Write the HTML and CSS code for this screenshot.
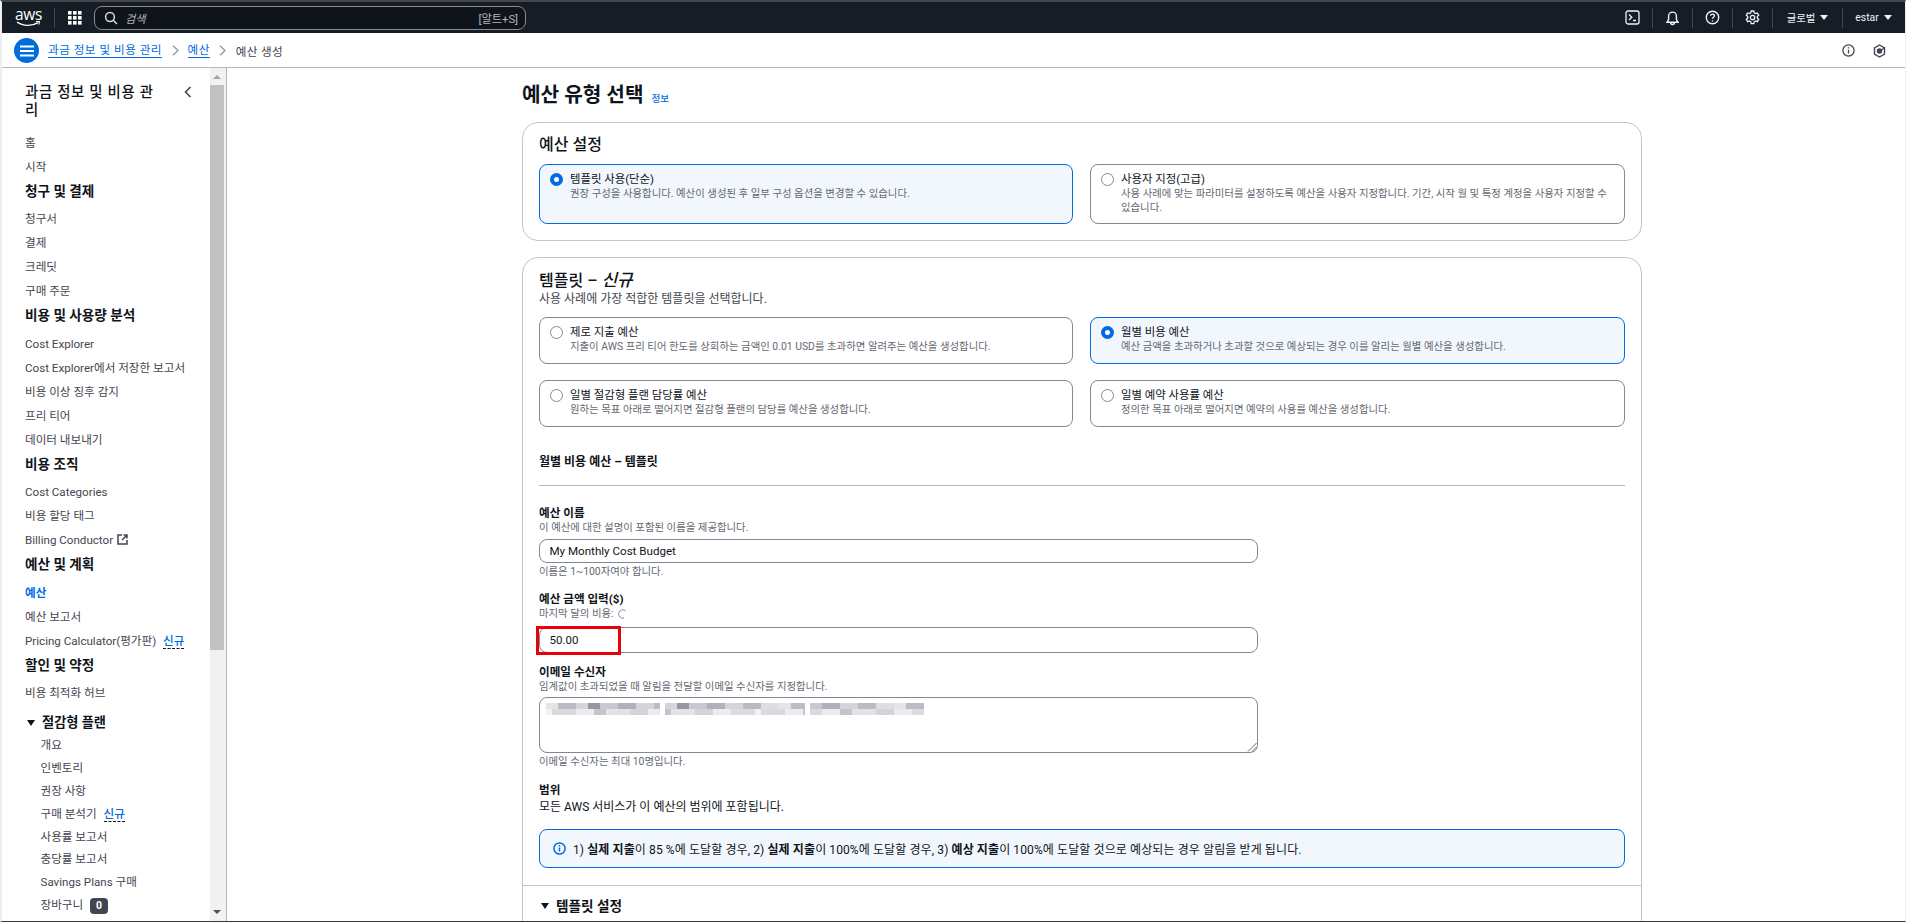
FILE: index.html
```
<!DOCTYPE html>
<html lang="ko">
<head>
<meta charset="utf-8">
<title>예산 생성</title>
<link rel="stylesheet" href="styles.css">
</head>
<body>
<div class="frame">
  <header class="topbar">
    <div class="logo">
      <span class="logo-text">aws</span>
      <svg class="logo-smile" width="25" height="6" viewBox="0 0 25 6"><path d="M1 1c6 4.400 15 4.400 21 .6" fill="none" stroke="#fff" stroke-width="1.400"/><path d="M20 .6l3.600-.3-.9 3.400" fill="none" stroke="#fff" stroke-width="1.100"/></svg>
    </div>
    <span class="logo-div"></span>
    <svg class="grid-icon" width="14" height="14" viewBox="0 0 14 14" fill="#fff"><rect width="3.600" height="3.600"/><rect x="5" width="3.600" height="3.600"/><rect x="10" width="3.600" height="3.600"/><rect y="5" width="3.600" height="3.600"/><rect x="5" y="5" width="3.600" height="3.600"/><rect x="10" y="5" width="3.600" height="3.600"/><rect y="10" width="3.600" height="3.600"/><rect x="5" y="10" width="3.600" height="3.600"/><rect x="10" y="10" width="3.600" height="3.600"/></svg>
    <div class="search">
      <svg width="14" height="14" viewBox="0 0 14 14" fill="none" stroke="#d5dbdb" stroke-width="1.500"><circle cx="6" cy="6" r="4.400"/><path d="M9.200 9.200l3.800 3.800"/></svg>
      <span class="search-ph">검색</span>
      <span class="search-key">[알트+S]</span>
    </div>
    <div class="top-actions">
      <span class="slot first"><svg width="15" height="15" viewBox="0 0 15 15" fill="none" stroke="#f3f3f7" stroke-width="1.300"><rect x="1" y="1" width="13" height="13" rx="2"/><path d="M4 4.500l2.800 2.700L4 10M8 10.500h3"/></svg></span>
      <span class="slot"><svg width="15" height="16" viewBox="0 0 15 16" fill="none" stroke="#f3f3f7" stroke-width="1.400"><path d="M2 12.200h11l-1.600-2.600V6a3.900 3.900 0 0 0-7.800 0v3.600zM5.600 12.600a1.900 1.900 0 0 0 3.800 0"/></svg></span>
      <span class="slot"><svg width="15" height="15" viewBox="0 0 15 15" fill="none" stroke="#f3f3f7" stroke-width="1.400"><circle cx="7.500" cy="7.500" r="6.200"/><path d="M5.600 5.800c.1-2.300 3.800-2.300 3.800 0 0 1.500-1.900 1.400-1.900 3"/><path d="M7.500 10.300v1.200"/></svg></span>
      <span class="slot"><svg width="15" height="15" viewBox="0 0 15 15" fill="none" stroke="#f3f3f7" stroke-width="1.300"><path d="M6.200 1h2.600l.4 1.800 1.400.8 1.800-.6 1.300 2.200-1.400 1.300v1.600l1.400 1.300-1.300 2.200-1.800-.6-1.400.8-.4 1.800H6.200l-.4-1.800-1.400-.8-1.800.6-1.300-2.200 1.400-1.300V6.500L1.300 5.200l1.300-2.200 1.800.6 1.400-.8z"/><circle cx="7.500" cy="7.500" r="2.200"/></svg></span>
      <span class="slot menu region">글로벌<i class="caret"></i></span>
      <span class="slot menu user">estar<i class="caret"></i></span>
    </div>
  </header>

  <div class="crumbbar">
    <span class="menu-btn"><svg width="14" height="12" viewBox="0 0 14 12" stroke="#fff" stroke-width="1.800"><path d="M0 1.500h14M0 6h14M0 10.500h14"/></svg></span>
    <a class="crumb-link">과금 정보 및 비용 관리</a>
    <svg class="crumb-sep" width="7" height="11" viewBox="0 0 7 11" fill="none" stroke="#879596" stroke-width="1.200"><path d="M1 .8l5 4.700-5 4.700"/></svg>
    <a class="crumb-link">예산</a>
    <svg class="crumb-sep" width="7" height="11" viewBox="0 0 7 11" fill="none" stroke="#879596" stroke-width="1.200"><path d="M1 .8l5 4.700-5 4.700"/></svg>
    <span class="crumb-cur">예산 생성</span>
    <span class="crumb-tools">
      <svg width="13" height="13" viewBox="0 0 13 13" fill="none" stroke="#424650" stroke-width="1.300"><circle cx="6.500" cy="6.500" r="5.600"/><path d="M6.500 5.800v3.800M6.500 3.200v1.200"/></svg>
      <svg width="13" height="14" viewBox="0 0 13 14" fill="none" stroke="#424650" stroke-width="1.400"><path d="M6.500 1l5 2.900v6.200l-5 2.900-5-2.900V3.900z"/><circle cx="6.500" cy="7" r="2" fill="#424650"/><path d="M6.500 7l5-3" /></svg>
    </span>
  </div>

  <div class="workspace">
    <nav class="sidebar">
      <div class="nav-title-row">
        <h2 class="nav-title">과금 정보 및 비용 관리</h2>
        <svg class="nav-close" width="8" height="12" viewBox="0 0 8 12" fill="none" stroke="#424650" stroke-width="1.600"><path d="M6.500 1L1.500 6l5 5"/></svg>
      </div>
      <ul class="nav-list">
        <li class="nav-item">홈</li>
        <li class="nav-item">시작</li>
        <li class="nav-head">청구 및 결제</li>
        <li class="nav-item">청구서</li>
        <li class="nav-item">결제</li>
        <li class="nav-item">크레딧</li>
        <li class="nav-item">구매 주문</li>
        <li class="nav-head">비용 및 사용량 분석</li>
        <li class="nav-item">Cost Explorer</li>
        <li class="nav-item">Cost Explorer에서 저장한 보고서</li>
        <li class="nav-item">비용 이상 징후 감지</li>
        <li class="nav-item">프리 티어</li>
        <li class="nav-item">데이터 내보내기</li>
        <li class="nav-head">비용 조직</li>
        <li class="nav-item">Cost Categories</li>
        <li class="nav-item">비용 할당 태그</li>
        <li class="nav-item">Billing Conductor <svg class="ext" width="11" height="11" viewBox="0 0 11 11" fill="none" stroke="#424650" stroke-width="1.500"><path d="M5 1H1v9h9V6M6.500 1H10v3.500M10 1L5 6"/></svg></li>
        <li class="nav-head">예산 및 계획</li>
        <li class="nav-item active">예산</li>
        <li class="nav-item">예산 보고서</li>
        <li class="nav-item">Pricing Calculator(평가판) <span class="new">신규</span></li>
        <li class="nav-head">할인 및 약정</li>
        <li class="nav-item">비용 최적화 허브</li>
        <li class="nav-group"><i class="tri"></i>절감형 플랜</li>
        <li class="nav-item sub">개요</li>
        <li class="nav-item sub">인벤토리</li>
        <li class="nav-item sub">권장 사항</li>
        <li class="nav-item sub">구매 분석기 <span class="new">신규</span></li>
        <li class="nav-item sub">사용률 보고서</li>
        <li class="nav-item sub">충당률 보고서</li>
        <li class="nav-item sub">Savings Plans 구매</li>
        <li class="nav-item sub">장바구니 <span class="count">0</span></li>
      </ul>
    </nav>
    <div class="scrollbar">
      <i class="sb-up"></i>
      <span class="sb-thumb"></span>
      <i class="sb-down"></i>
    </div>

    <main class="main">
      <div class="page-title"><h1>예산 유형 선택</h1><a class="info">정보</a></div>

      <section class="card">
        <h2 class="card-h">예산 설정</h2>
        <div class="tiles">
          <div class="tile on tall"><i class="radio"></i><div><div class="tile-t">템플릿 사용(단순)</div><div class="tile-d">권장 구성을 사용합니다. 예산이 생성된 후 일부 구성 옵션을 변경할 수 있습니다.</div></div></div>
          <div class="tile tall"><i class="radio"></i><div><div class="tile-t">사용자 지정(고급)</div><div class="tile-d">사용 사례에 맞는 파라미터를 설정하도록 예산을 사용자 지정합니다. 기간, 시작 월 및 특정 계정을 사용자 지정할 수 있습니다.</div></div></div>
        </div>
      </section>

      <section class="card second">
        <div class="card-body">
          <h2 class="card-h tight">템플릿 – <em>신규</em></h2>
          <p class="card-sub">사용 사례에 가장 적합한 템플릿을 선택합니다.</p>
          <div class="tiles">
            <div class="tile"><i class="radio"></i><div><div class="tile-t">제로 지출 예산</div><div class="tile-d">지출이 AWS 프리 티어 한도를 상회하는 금액인 0.01 USD를 초과하면 알려주는 예산을 생성합니다.</div></div></div>
            <div class="tile on"><i class="radio"></i><div><div class="tile-t">월별 비용 예산</div><div class="tile-d">예산 금액을 초과하거나 초과할 것으로 예상되는 경우 이를 알리는 월별 예산을 생성합니다.</div></div></div>
            <div class="tile"><i class="radio"></i><div><div class="tile-t">일별 절감형 플랜 담당률 예산</div><div class="tile-d">원하는 목표 아래로 떨어지면 절감형 플랜의 담당률 예산을 생성합니다.</div></div></div>
            <div class="tile"><i class="radio"></i><div><div class="tile-t">일별 예약 사용률 예산</div><div class="tile-d">정의한 목표 아래로 떨어지면 예약의 사용률 예산을 생성합니다.</div></div></div>
          </div>
          <h3 class="sub-head">월별 비용 예산 – 템플릿</h3>
          <hr class="rule">

          <label class="f-label first">예산 이름</label>
          <div class="f-desc">이 예산에 대한 설명이 포함된 이름을 제공합니다.</div>
          <div class="input name">My Monthly Cost Budget</div>
          <div class="f-hint">이름은 1~100자여야 합니다.</div>

          <label class="f-label">예산 금액 입력($)</label>
          <div class="f-desc">마지막 달의 비용: <svg class="spin" width="10" height="10" viewBox="0 0 10 10" fill="none" stroke="#8c8c94" stroke-width="1"><path d="M8.500 1.800A4.200 4.200 0 1 0 7 9"/></svg></div>
          <div class="input amount">50.00<span class="highlight"></span></div>

          <label class="f-label">이메일 수신자</label>
          <div class="f-desc">임계값이 초과되었을 때 알림을 전달할 이메일 수신자를 지정합니다.</div>
          <div class="textarea">
            <div class="redact"><span class="r1"></span><span class="r2"></span><span class="r3"></span></div>
            <svg class="grip" width="10" height="10" viewBox="0 0 10 10" stroke="#6a6a6a" stroke-width="1"><path d="M9.500 1L1 9.500M9.500 5L5 9.500"/></svg>
          </div>
          <div class="f-hint">이메일 수신자는 최대 10명입니다.</div>

          <div class="scope-h">범위</div>
          <div class="scope-t">모든 AWS 서비스가 이 예산의 범위에 포함됩니다.</div>

          <div class="alert">
            <svg width="13" height="13" viewBox="0 0 13 13" fill="none" stroke="#006ce0" stroke-width="1.500"><circle cx="6.500" cy="6.500" r="5.600"/><path d="M6.500 5.600v4M6.500 3v1.400"/></svg>
            <span>1) <b>실제 지출</b>이 85 %에 도달할 경우, 2) <b>실제 지출</b>이 100%에 도달할 경우, 3) <b>예상 지출</b>이 100%에 도달할 것으로 예상되는 경우 알림을 받게 됩니다.</span>
          </div>
        </div>
        <div class="expander"><i class="tri"></i>템플릿 설정</div>
      </section>
    </main>
  </div>
</div>
</body>
</html>
```
FILE: styles.css
```
* { box-sizing: border-box; }
html, body { margin: 0; height: 100%; overflow: hidden; }
body {
  font-family: Roboto, "Noto Sans CJK KR", sans-serif;
  font-size: 11.6px;
  color: #0f141a;
  background: #fff;
}
.frame {
  height: 922px;
  display: flex;
  flex-direction: column;
  overflow: hidden;
  border-top: 2px solid #45474a;
  border-left: 2px solid #eeeeee;
  border-right: 1px solid #eeeeee;
  border-bottom: 1px solid #333a44;
}

/* top navigation */
.topbar {
  flex: 0 0 31px;
  display: flex;
  align-items: center;
  background: #161d26;
  color: #f3f3f7;
  padding-left: 14px;
}
.logo { width: 25px; display: flex; flex-direction: column; align-items: center; height: 19px; }
.logo-text { font-family: "Open Sans", sans-serif; font-size: 15.5px; line-height: 13px; color: #fff; letter-spacing: -.4px; }
.logo-div { width: 1px; height: 20px; background: #424650; margin-left: 13px; }
.grid-icon { margin-left: 13px; }
.search {
  margin-left: 12px;
  width: 432px;
  height: 24px;
  border: 1px solid #8c8c94;
  border-radius: 8px;
  background: #0f141a;
  display: flex;
  align-items: center;
  padding: 0 7px 0 9px;
}
.search-ph { margin-left: 7px; font-style: italic; color: #b4b4bb; font-size: 11.2px; }
.search-key { margin-left: auto; color: #b4b4bb; font-size: 11.2px; }
.top-actions { margin-left: auto; display: flex; align-items: center; }
.slot { width: 40px; height: 20px; display: flex; align-items: center; justify-content: center; border-left: 1px solid #424650; }
.slot.first { border-left: 0; }
.slot.menu { font-size: 10.4px; color: #f3f3f7; gap: 5px; }
.slot.region { width: 70px; }
.slot.user { width: 63px; padding-right: 1px; }
.caret { width: 0; height: 0; border-left: 4px solid transparent; border-right: 4px solid transparent; border-top: 5px solid #f3f3f7; }

/* breadcrumbs */
.crumbbar {
  flex: 0 0 35px;
  display: flex;
  align-items: center;
  padding: 1px 0 0 12px;
  border-bottom: 1px solid #b4b4bb;
  background: #fff;
}
.menu-btn { width: 25px; height: 25px; border-radius: 50%; background: #006ce0; display: flex; align-items: center; justify-content: center; }
.crumb-link { margin-left: 9px; color: #006ce0; border-bottom: 1px solid #006ce0; line-height: 14px; font-size: 11.6px; letter-spacing: .5px; }
.crumb-sep { margin-left: 9.5px; }
.crumb-cur { margin-left: 9.5px; color: #424650; font-size: 11.6px; letter-spacing: .3px; }
.crumb-tools { margin-left: auto; margin-right: 19px; display: flex; gap: 18px; align-items: center; }

/* layout */
.workspace { flex: 1; display: flex; min-height: 0; }
.sidebar { width: 208px; flex: none; padding: 16px 0 0 23px; overflow: hidden; }
.nav-title-row { display: flex; align-items: flex-start; }
.nav-title { margin: 0; width: 136px; font-size: 14.4px; line-height: 17.5px; font-weight: 500; letter-spacing: .7px; word-break: break-all; }
.nav-close { margin: 2px 0 0 23px; }
.nav-list { list-style: none; margin: 12px 0 0; padding: 0; }
.nav-item { height: 24px; line-height: 24px; color: #424650; white-space: nowrap; font-size: 11.6px; }
.nav-item.active { color: #006ce0; font-weight: 700; }
.nav-item.sub { padding-left: 15.5px; height: 22.9px; line-height: 22.9px; }
.nav-head { height: 25px; line-height: 25px; margin-bottom: 3.4px; font-size: 13.6px; font-weight: 700; color: #0f141a; }
.nav-group { height: 22px; line-height: 22px; margin-top: 7px; font-size: 13.2px; font-weight: 700; display: flex; align-items: center; }
.tri { width: 0; height: 0; border-left: 4px solid transparent; border-right: 4px solid transparent; border-top: 6px solid #0f141a; margin: 0 7px 0 2px; }
.new { color: #006ce0; font-weight: 500; border-bottom: 1px dashed #0f141a; margin-left: 4px; line-height: 14px; display: inline-block; }
.count { display: inline-block; background: #424650; color: #fff; border-radius: 4px; width: 18px; height: 16px; line-height: 16px; text-align: center; font-weight: 700; font-size: 10.4px; margin-left: 4px; }
.ext { vertical-align: -1px; margin-left: 1px; }

.scrollbar { width: 16px; flex: none; background: #f1f1f1; display: flex; flex-direction: column; align-items: center; border-right: 2px solid #f1f1f1; }
.sb-up { margin-top: 7px; width: 0; height: 0; border-left: 4px solid transparent; border-right: 4px solid transparent; border-bottom: 4px solid #a3a3a3; }
.sb-thumb { width: 14px; height: 565px; background: #c1c1c1; margin-top: 6px; }
.sb-down { margin-top: auto; margin-bottom: 7px; width: 0; height: 0; border-left: 4px solid transparent; border-right: 4px solid transparent; border-top: 4px solid #505050; }

.main { flex: 1; min-width: 0; padding: 16px 0 0 295px; border-left: 1px solid #b4b4bb; overflow: hidden; }
.page-title { display: flex; align-items: baseline; height: 22px; margin-bottom: 16px; }
.page-title h1 { margin: 0; font-size: 20.2px; line-height: 22px; font-weight: 700; }
.info { margin-left: 8px; color: #006ce0; font-size: 9.6px; font-weight: 500; }

.card { width: 1120px; border: 1px solid #bfc4cf; border-radius: 16px; padding: 11px 16px 16px; }
.card.second { margin-top: 16px; padding: 12px 0 120px; }
.card-body { padding: 0 16px; }
.card-h { margin: 0 0 8px; font-size: 16px; line-height: 22px; font-weight: 500; }
.card-h.tight { margin: 0; height: 20px; line-height: 20px; }
.card-h em { font-style: italic; font-size: 17px; }
.card-sub { margin: 1px 0 10px; font-size: 12px; line-height: 16px; color: #424650; }

.tiles { display: grid; grid-template-columns: 534px 535px; column-gap: 17px; row-gap: 16px; }
.tile { display: flex; gap: 7.5px; border: 1px solid #7f8896; border-radius: 8px; padding: 7px 12px 9px 9.5px; min-height: 47px; background: #fff; }
.tile.tall { min-height: 60px; }
.tile.on { border-color: #006ce0; background: #f2f7fe; }
.radio { flex: none; width: 13px; height: 13px; margin-top: 1px; border-radius: 50%; border: 1.5px solid #7f8896; background: #fff; }
.on .radio { border: 4px solid #006ce0; }
.tile-t { font-size: 11.4px; line-height: 15px; color: #0f141a; }
.tile-d { font-size: 10.4px; line-height: 13.5px; color: #656871; }

.sub-head { margin: 27px 0 0; font-size: 12px; line-height: 16px; font-weight: 700; }
.rule { margin: 15px 0 0; border: 0; border-top: 1px solid #b4b4bb; width: 1086px; }

.f-label { display: block; margin-top: 12.5px; font-size: 11.6px; line-height: 15px; font-weight: 700; }
.f-label.first { margin-top: 20px; }
.f-desc { font-size: 10.4px; line-height: 14px; color: #656871; }
.f-hint { margin-top: 2px; font-size: 10.4px; line-height: 14px; color: #656871; }
.spin { vertical-align: -2px; margin-left: 1px; }
.input { width: 719px; border: 1px solid #7f8896; border-radius: 8px; padding: 0 9.5px; display: flex; align-items: center; font-size: 11.6px; position: relative; }
.input.name { height: 24px; margin-top: 4px; }
.input.amount { height: 26px; margin-top: 6px; }
.highlight { position: absolute; left: -4px; top: -2px; width: 85px; height: 29px; border: 3px solid #e8000b; }
.textarea { width: 719px; height: 55.5px; margin-top: 3px; border: 1px solid #7f8896; border-radius: 8px; position: relative; padding: 5px 0 0 5.5px; }
.grip { position: absolute; right: 0; bottom: 0; }

.redact { display: flex; height: 12px; gap: 5px; }
.redact span {
  display: block;
  height: 12px;
  background-image:
    linear-gradient(90deg, #e5e5e8 0 12px, #bcbdc4 12px 30px, #d5d6da 30px 42px, #97989f 42px 54px, #c8c9ce 54px 72px, #b1b2b9 72px 90px, #d4d5d9 90px 108px, #bbbcc2 108px 126px, #dedee1 126px 144px),
    linear-gradient(90deg, #f2f2f3 0 6px, #d9dadd 6px 30px, #ececee 30px 48px, #c4c5cb 48px 60px, #e3e3e6 60px 84px, #d3d4d8 84px 102px, #ececee 102px 120px, #dcdcdf 120px 144px);
  background-size: 144px 6px, 144px 6px;
  background-repeat: repeat-x;
}
.redact .r1 { width: 114px; background-position: 0 0, 0 6px; }
.redact .r2 { width: 140px; background-position: -30px 0, -54px 6px; }
.redact .r3 { width: 114px; background-position: -60px 0, -18px 6px; }

.scope-h { margin-top: 14px; font-size: 11.6px; line-height: 15px; font-weight: 700; }
.scope-t { margin-top: 2.5px; font-size: 12px; line-height: 15px; }
.alert { width: 1086px; height: 38.5px; margin-top: 14px; border: 1px solid #006ce0; border-radius: 8px; background: #f2f7fe; display: flex; align-items: center; gap: 7px; padding: 0 13px; font-size: 12px; letter-spacing: .1px; }
.alert b { font-weight: 700; }

.expander { margin-top: 17px; border-top: 1px solid #bfc4cf; padding: 11px 0 0 16px; display: flex; align-items: center; font-size: 13.6px; line-height: 18px; font-weight: 700; }
```
